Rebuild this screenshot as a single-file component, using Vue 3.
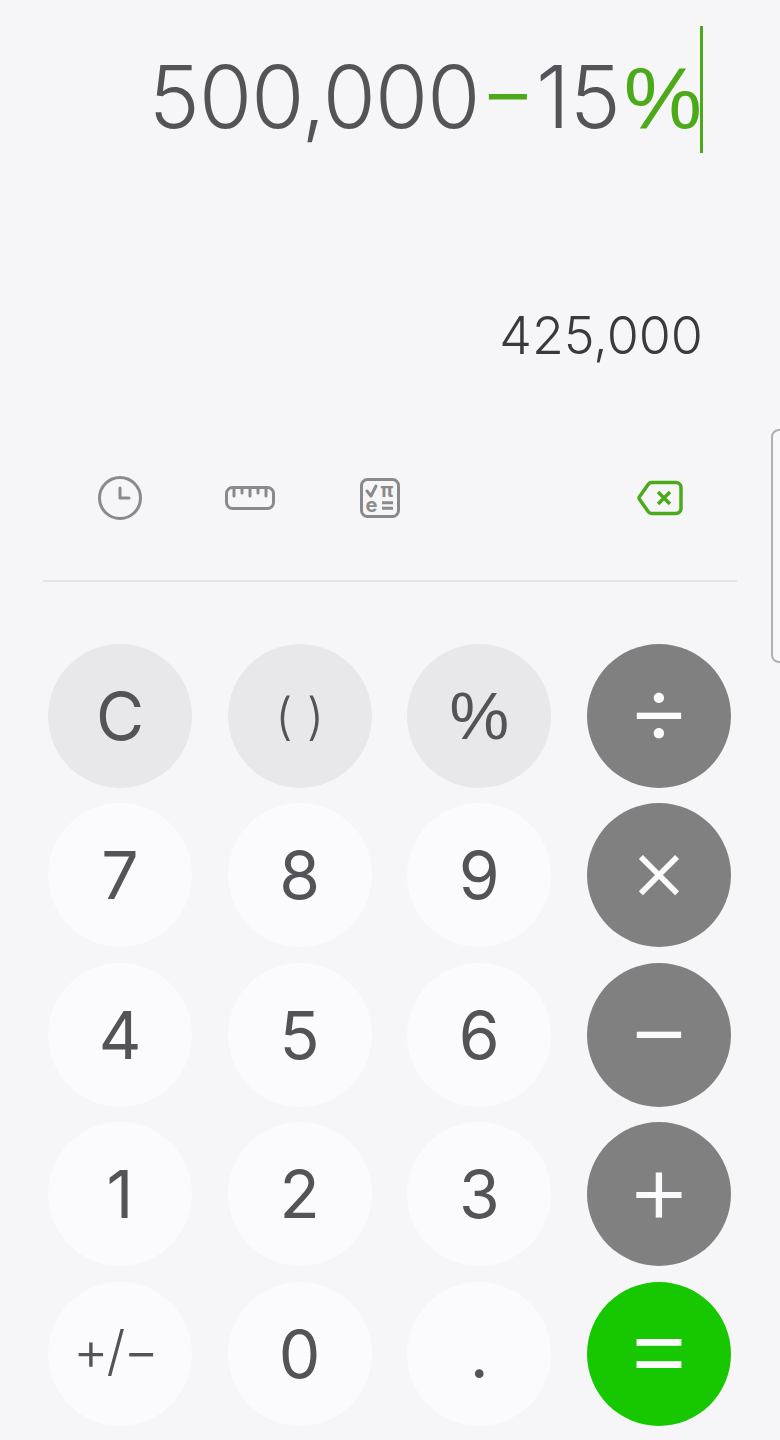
<template>
  <div class="calc">
    <!-- 入力欄 -->
    <div class="expression">
      <div class="expression-text">
        <span class="number">500,000</span><span class="green">−</span><span>15</span><span class="green percent-sign">%</span>
      </div>
      <i class="caret"></i>
    </div>
    <div class="result">425,000</div>

    <!-- ツールバー -->
    <div class="toolbar">
      <svg class="tool" width="50" height="50" viewBox="0 0 50 50">
        <circle cx="25" cy="25" r="20.5" />
        <path d="M25 15v10h9" />
      </svg>
      <svg class="tool" width="50" height="50" viewBox="0 0 50 50">
        <rect x="1.500" y="14.500" width="47" height="21" rx="6" />
        <path d="M9 15v8M17 15v5M25 15v8M33 15v5M41 15v8" />
      </svg>
      <svg class="tool" width="50" height="50" viewBox="0 0 50 50">
        <rect x="6.500" y="6.500" width="37" height="37" rx="6" />
        <path d="M12 18l4 5 5-10" />
        <text x="25.500" y="24" class="math">π</text>
        <text x="10.500" y="38.600" class="math">e</text>
        <path d="M27 29.700h11M27 35.300h11" stroke-linecap="butt" />
      </svg>
      <svg class="back" width="50" height="50" viewBox="0 0 50 50">
        <path d="M16.500 9.500H41a5 5 0 0 1 5 5v21a5 5 0 0 1-5 5H16.500a4 4 0 0 1-3-1.500L5 27a3 3 0 0 1 0-4l8.500-12a4 4 0 0 1 3-1.500z" />
        <path d="M23 19l12 12M35 19L23 31" stroke-width="3.500" />
      </svg>
    </div>
    <div class="divider"></div>

    <!-- キーパッド -->
    <div class="keypad">
      <button v-for="key in keys" :key="key.label" class="key" :class="key.type">
        {{ key.label }}
      </button>
    </div>

    <div class="handle"></div>
  </div>
</template>

<script setup>
const keys = [
  { label: 'C', type: 'func' },
  { label: '( )', type: 'func parens' },
  { label: '%', type: 'func percent' },
  { label: '÷', type: 'op' },
  { label: '7', type: 'num' },
  { label: '8', type: 'num' },
  { label: '9', type: 'num' },
  { label: '×', type: 'op times' },
  { label: '4', type: 'num' },
  { label: '5', type: 'num' },
  { label: '6', type: 'num' },
  { label: '−', type: 'op' },
  { label: '1', type: 'num' },
  { label: '2', type: 'num' },
  { label: '3', type: 'num' },
  { label: '+', type: 'op' },
  { label: '+/−', type: 'num sign' },
  { label: '0', type: 'num' },
  { label: '.', type: 'num' },
  { label: '=', type: 'equal' }
]
</script>

<style>
html, body {
  background: #f6f6f8;
}
</style>

<style scoped>
.calc {
  position: relative;
  width: 780px;
  height: 1440px;
  overflow: hidden;
  background: #f6f6f8;
  font-family: Inter, "Liberation Sans", sans-serif;
  color: #545458;
}

.expression {
  display: flex;
  justify-content: flex-end;
  align-items: center;
  height: 127px;
  margin-top: 26px;
  padding-right: 77px;
}

.expression-text {
  padding-top: 15px;
  font-size: 86px;
  font-weight: 350;
  line-height: 100px;
  white-space: nowrap;
}

.number {
  letter-spacing: -0.8px;
}

.green {
  color: #4caa1a;
}

.percent-sign {
  margin-left: 3px;
  font-family: "Liberation Sans", sans-serif;
  font-size: 88px;
  font-weight: 400;
}

.caret {
  flex-shrink: 0;
  width: 3px;
  height: 127px;
  margin-left: -2px;
  background: #4caa1a;
}

.result {
  margin-top: 150px;
  padding-right: 77px;
  text-align: right;
  font-size: 52px;
  font-weight: 350;
  line-height: 66px;
  color: #3a3a3e;
}

.toolbar {
  display: flex;
  gap: 80px;
  margin-top: 104px;
  padding: 0 95px;
}

.tool {
  fill: none;
  stroke: #8a8a8a;
  stroke-width: 3;
  stroke-linecap: round;
  stroke-linejoin: round;
}

.math {
  fill: #8a8a8a;
  stroke: none;
  font-size: 20px;
  font-weight: 700;
}

.back {
  margin-left: auto;
  fill: none;
  stroke: #4caa1a;
  stroke-width: 3.500;
  stroke-linejoin: round;
}

.divider {
  height: 2px;
  margin: 57px 43px 0;
  background: #e6e6e8;
}

.keypad {
  display: grid;
  grid-template-columns: repeat(4, 144px);
  grid-auto-rows: 144px;
  column-gap: 35.67px;
  row-gap: 15.6px;
  margin: 61.5px 0 0 48px;
}

.key {
  display: flex;
  align-items: center;
  justify-content: center;
  padding: 0;
  border: none;
  border-radius: 50%;
  font-family: inherit;
  font-size: 66px;
  font-weight: 400;
  color: #545458;
}

.num {
  background: #fbfbfd;
}

.func {
  background: #e8e8ea;
}

.parens {
  font-size: 50px;
  font-weight: 350;
}

.percent {
  font-family: "Liberation Sans", sans-serif;
  font-size: 67px;
}

.sign {
  padding: 0 10px 6px 0;
  font-size: 54px;
  font-weight: 350;
  letter-spacing: -2px;
}

.op {
  padding-bottom: 16px;
  background: #808080;
  color: #fbfbfd;
  font-size: 100px;
  font-weight: 350;
}

.times {
  padding-bottom: 14px;
  font-size: 90px;
}

.equal {
  padding-bottom: 18px;
  background: #17c700;
  color: #fbfbfd;
  font-size: 110px;
  font-weight: 300;
}

.handle {
  position: absolute;
  left: 771px;
  top: 429px;
  width: 20px;
  height: 234px;
  box-sizing: border-box;
  border: 2px solid #b0b0b0;
  border-radius: 8px;
  background: #f8f8fa;
}
</style>
